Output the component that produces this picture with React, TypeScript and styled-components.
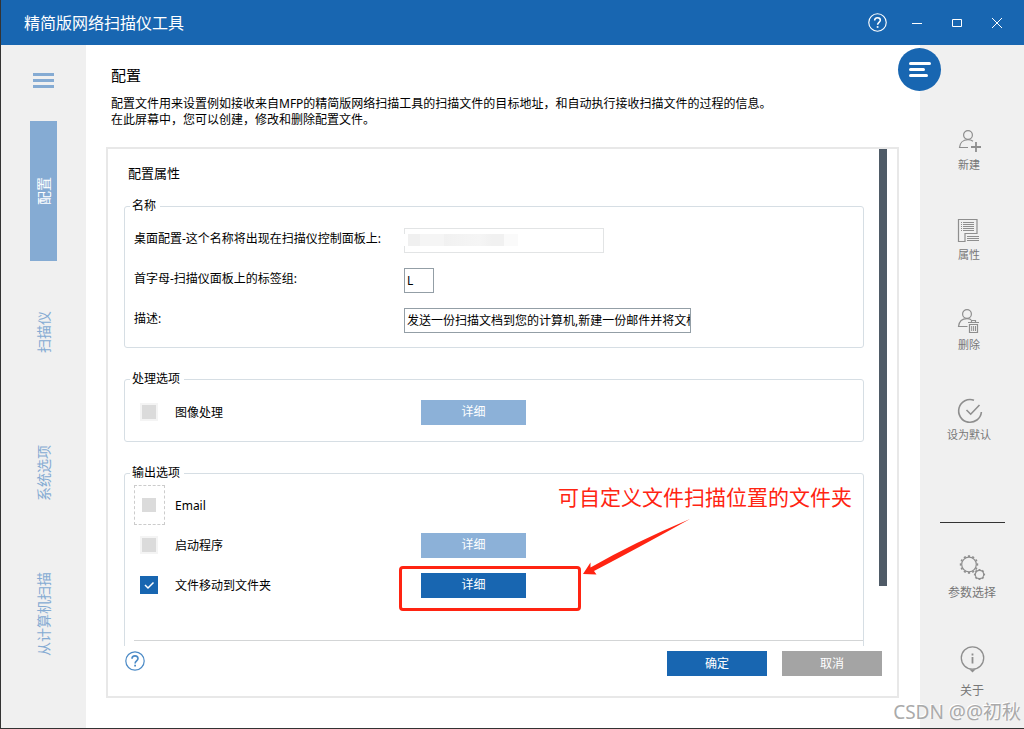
import React from "react";
import styled, { createGlobalStyle } from "styled-components";

const blue = "#1866b1";
const softBlue = "#8cb1d8";
const red = "#ff2412";

const GlobalStyle = createGlobalStyle`
  *, *::before, *::after { box-sizing: border-box; }
  body {
    margin: 0;
    background: #fff;
    color: #000;
    font: 12px/16px "Noto Sans", "Noto Sans CJK SC", sans-serif;
  }
  button, input { font: inherit; }
  button { cursor: pointer; }
  svg { display: block; fill: none; }
`;

const Window = styled.div`
  position: relative;
  display: flex;
  flex-direction: column;
  height: 100vh;
  min-height: 480px;
  border: solid #333;
  border-width: 0 0 1px 1px;
  overflow: hidden;
`;

const TitleBar = styled.header`
  display: flex;
  flex: none;
  align-items: center;
  justify-content: space-between;
  height: 45px;
  padding: 0 7px 0 23px;
  background: ${blue};
  color: #fff;
`;

const AppTitle = styled.h1`
  margin: 0;
  font-size: 16px;
  line-height: 24px;
  font-weight: 400;
`;

const WindowControls = styled.div`
  display: flex;
`;

const IconButton = styled.button`
  display: flex;
  align-items: center;
  justify-content: center;
  width: 40px;
  height: 45px;
  padding: 0;
  border: 0;
  background: none;
  color: inherit;
`;

const Body = styled.div`
  position: relative;
  display: grid;
  grid-template-columns: 85px minmax(0, 1fr) 104px;
  grid-template-rows: minmax(0, 1fr);
  flex: 1;
  min-height: 0;
`;

const Nav = styled.nav`
  display: flex;
  flex-direction: column;
  gap: 1px;
  padding: 28px 0 0 29px;
  background: #f0f0f0;
`;

const MenuButton = styled.button`
  display: flex;
  flex-direction: column;
  gap: 3px;
  width: 27px;
  margin-bottom: 32px;
  padding: 0 3px;
  border: 0;
  background: none;
`;

const MenuLine = styled.span`
  width: 21px;
  height: 3px;
  background: #85abd3;
`;

const Tab = styled.button<{ $active?: boolean }>`
  width: 27px;
  height: 140px;
  padding: 0;
  border: 0;
  background: ${(p) => (p.$active ? "#85abd3" : "transparent")};
  color: ${(p) => (p.$active ? "#fff" : "#85abd3")};
  font-size: 14px;
  line-height: 24px;
  text-align: center;
  writing-mode: vertical-rl;
  text-orientation: sideways;
  transform: rotate(180deg);
`;

const Main = styled.main`
  display: flex;
  flex-direction: column;
  min-height: 0;
  padding: 20px 21px 30px 20px;
`;

const Intro = styled.div`
  padding-left: 5px;
`;

const PageTitle = styled.h2`
  margin: 0 0 11px;
  font-size: 15px;
  line-height: 20px;
  font-weight: 400;
`;

const Description = styled.p`
  margin: 0;
`;

const Card = styled.form`
  display: flex;
  flex-direction: column;
  flex: 1;
  min-height: 0;
  margin-top: 19px;
  border: 2px solid #e8e8e8;
`;

const Viewport = styled.div`
  display: flex;
  flex: 1 1 0;
  min-height: 0;
  padding-right: 10px;
  overflow: hidden;
`;

const Properties = styled.div`
  flex: 1;
  min-width: 0;
  padding: 14px 15px 0 16px;
`;

const Scrollbar = styled.div`
  flex: none;
  width: 8px;
  height: 88%;
  background: #4f5b67;
`;

const SectionTitle = styled.h3`
  margin: 0 0 15px;
  padding-left: 4px;
  font-size: 13px;
  line-height: 20px;
  font-weight: 400;
`;

const Group = styled.fieldset`
  min-width: 0;
  margin: 0 0 23px;
  padding: 0;
  border: 1px solid #d6dee4;
  border-radius: 3px;
`;

const Legend = styled.legend`
  margin-left: 5px;
  padding: 0 4px 0 2px;
`;

const Rows = styled.div<{ $top: number; $bottom: number }>`
  position: relative;
  margin: ${(p) => `${p.$top}px 0 ${p.$bottom}px 9px`};
`;

const Row = styled.div`
  display: flex;
  align-items: center;
  height: 40px;
`;

const FieldLabel = styled.label`
  flex: none;
  width: 270px;
  padding-bottom: 2px;
`;

const Field = styled.span`
  position: relative;
`;

const TextInput = styled.input<{ $width: number }>`
  display: block;
  width: ${(p) => p.$width}px;
  height: 25px;
  padding: 0 0 0 2px;
  border: 1px solid #939ea6;
  border-radius: 0;
  background: #fff;
  color: #000;
  outline: 0;
  &:disabled { border-color: #e2e4e5; }
`;

const Redaction = styled.span`
  position: absolute;
  left: 0;
  top: 6px;
  width: 114px;
  height: 12px;
  background: linear-gradient(90deg, #fff 4px, #f0f0f0 4px, #f0f0f0 16px, #f5f5f5 16px, #f5f5f5 40px, #f1f1f1 40px, #f4f4f4 64px, #f5f5f5 76px, #f1f1f1 88px, #f1f1f1 100px, #fafafa 100px);
`;

const CheckCell = styled.span<{ $focused?: boolean }>`
  position: relative;
  display: flex;
  align-items: center;
  flex: none;
  width: 31px;
  height: 40px;
  margin-right: 10px;
  padding-left: ${(p) => (p.$focused ? 5 : 6)}px;
  border: ${(p) => (p.$focused ? "1px dashed #ccc" : "0")};
`;

const Checkbox = styled.input<{ $plain?: boolean }>`
  appearance: none;
  width: 18px;
  height: 18px;
  margin: 0;
  border: 2px solid ${(p) => (p.$plain ? "#fff" : "#f4f4f4")};
  background: #dbdbdb;
  &:checked {
    border-color: ${blue};
    background: ${blue};
  }
`;

const Tick = styled.svg`
  position: absolute;
  left: 6px;
  pointer-events: none;
`;

const OptionLabel = styled.label`
  flex: none;
  width: 246px;
  padding-top: 2px;
`;

const Button = styled.button<{ $width: number; $tone?: string }>`
  width: ${(p) => p.$width}px;
  height: 25px;
  padding: 0;
  border: 0;
  background: ${(p) => p.$tone ?? blue};
  color: #fff;
`;

const Divider = styled.hr`
  margin: 35px 0 0;
  border: 0;
  border-top: 1px solid #d3d5d6;
`;

const Highlight = styled.div`
  position: absolute;
  left: 265px;
  top: 81px;
  width: 182px;
  height: 45px;
  border: 3px solid ${red};
  border-radius: 4px;
  pointer-events: none;
`;

const Note = styled.div`
  position: absolute;
  left: 424px;
  top: -2px;
  color: ${red};
  font-size: 21px;
  line-height: 28px;
  white-space: nowrap;
`;

const Arrow = styled.svg`
  position: absolute;
  left: 449px;
  top: 33px;
`;

const Footer = styled.footer`
  display: flex;
  align-items: flex-start;
  gap: 15px;
  flex: none;
  padding: 5px 15px 20px 17px;
`;

const HelpButton = styled.button`
  margin-right: auto;
  padding: 0;
  border: 0;
  background: none;
  color: #4b8ac6;
`;

const Tools = styled.aside`
  display: flex;
  flex-direction: column;
  align-items: center;
  padding-top: 84px;
  background: #f0f0f0;
  color: #8e8e8e;
`;

const ToolGroup = styled.div<{ $shift?: boolean }>`
  display: flex;
  flex-direction: column;
  align-items: center;
  gap: ${(p) => (p.$shift ? 46 : 45)}px;
  padding-right: ${(p) => (p.$shift ? 6 : 0)}px;
`;

const Tool = styled.button<{ $size: number; $gap: number }>`
  display: flex;
  flex-direction: column;
  align-items: center;
  gap: ${(p) => p.$gap}px;
  padding: 0;
  border: 0;
  background: none;
  color: #8e8e8e;
  font-size: ${(p) => p.$size}px;
  line-height: 16px;
  svg { overflow: visible; }
`;

const ToolText = styled.span`
  color: #777;
`;

const ToolDivider = styled.hr`
  width: 65px;
  margin: 79px 0 32px;
  border: 0;
  border-top: 1px solid #333;
`;

const PanelToggle = styled.button`
  position: absolute;
  right: 83px;
  top: 3px;
  display: flex;
  align-items: center;
  justify-content: center;
  width: 43px;
  height: 43px;
  padding: 0;
  border: 0;
  border-radius: 50%;
  background: ${blue};
`;

const Watermark = styled.div`
  position: absolute;
  right: 3px;
  bottom: 2px;
  color: #aaa;
  font-size: 19px;
  line-height: 28px;
  text-shadow: -1px -1px 0 #fff;
  white-space: nowrap;
  pointer-events: none;
`;

const QuestionIcon = ({ size, width }: { size: number; width: number }) => (
  <svg width={size} height={size} viewBox="0 0 20 20" stroke="currentColor" strokeWidth={width}>
    <circle cx="10" cy="10" r="9.2" />
    <path d="M7 7.8C7 5.9 8.2 4.9 10 4.9s3 1 3 2.7c0 2.2-2.9 2.4-2.9 4.8" strokeWidth="1.6" />
    <path d="M10.1 13.8v1.8" strokeWidth="1.8" />
  </svg>
);

const NewUserIcon = () => (
  <svg width="24" height="24" stroke="currentColor" strokeWidth="1.2">
    <circle cx="11" cy="6" r="4.4" />
    <path d="M11 18.5H2.5C2.8 14.5 5.5 10.7 11 10.7c2 0 3.6.6 5 1.6" />
    <path d="M14 18h10M19 13v10" strokeWidth="1.8" />
  </svg>
);

const PropertiesIcon = () => (
  <svg width="24" height="24" stroke="currentColor">
    <path d="M1.5.5H20v14H8v8H1.5z" strokeWidth="1.2" />
    <path d="M6 3.5h11M6 5.5h11M6 7.5h11M6 9.5h11M6 11.5h11M4 3.5h1M4 5.5h1M4 7.5h1M4 9.5h1M4 11.5h1M10 17.5h12M10 19.5h12M10 21.5h12" />
  </svg>
);

const DeleteUserIcon = () => (
  <svg width="24" height="24" stroke="currentColor" strokeWidth="1.2">
    <circle cx="10" cy="5" r="4.4" />
    <path d="M10.5 17.5H1.5C2 13.5 4.5 9.7 10 9.7c1.8 0 3 .3 4.2 1" />
    <path d="M11 13.5h11M14.5 13.5v-2h4v2M12.500 15.5h8v8h-8z" />
    <path d="M14.7 17v5M16.6 17v5M18.5 17v5" strokeWidth="1" />
  </svg>
);

const DefaultIcon = () => (
  <svg width="24" height="24" stroke="currentColor" strokeWidth="1.6">
    <path d="M17 1.2A11.4 11.4 0 1 0 24.4 13" />
    <path d="M9.5 11l4.2 4.2L22.5 6" />
  </svg>
);

const GearsIcon = () => (
  <svg width="26" height="26" stroke="currentColor">
    <circle cx="10" cy="9.5" r="7.3" strokeWidth="1.2" />
    <circle cx="10" cy="9.5" r="8.4" strokeWidth="1.6" pathLength="24" strokeDasharray="1 1" strokeDashoffset="0.5" />
    <circle cx="20.5" cy="19.5" r="4.2" strokeWidth="1.2" />
    <circle cx="20.5" cy="19.5" r="5" strokeWidth="1.2" pathLength="16" strokeDasharray="1 1" strokeDashoffset="0.5" />
  </svg>
);

const AboutIcon = () => (
  <svg width="26" height="26" stroke="currentColor">
    <circle cx="13.5" cy="12" r="11.2" strokeWidth="1.3" />
    <path d="M10.5 23.500h6l-3 3z" fill="currentColor" stroke="none" />
    <path d="M13.5 7.5v2M13.5 11v6.5" strokeWidth="1.8" />
  </svg>
);

const options = [
  { id: "email", label: "Email", focused: true },
  { id: "launch", label: "启动程序", button: true },
  { id: "move", label: "文件移动到文件夹", button: true, checked: true },
];

const tools = [
  { label: "新建", icon: <NewUserIcon /> },
  { label: "属性", icon: <PropertiesIcon /> },
  { label: "删除", icon: <DeleteUserIcon /> },
  { label: "设为默认", icon: <DefaultIcon /> },
];

export default function App() {
  return (
    <>
      <GlobalStyle />
      <Window lang="zh-CN">
        <TitleBar>
          <AppTitle>精简版网络扫描仪工具</AppTitle>
          <WindowControls>
            <IconButton aria-label="帮助"><QuestionIcon size={19} width={1.2} /></IconButton>
            <IconButton aria-label="最小化">
              <svg width="10" height="10" stroke="currentColor"><path d="M0 5.5h10" /></svg>
            </IconButton>
            <IconButton aria-label="最大化">
              <svg width="10" height="8" stroke="currentColor"><path d="M.5.5h9v7h-9z" /></svg>
            </IconButton>
            <IconButton aria-label="关闭">
              <svg width="10" height="10" stroke="currentColor"><path d="M0 0l10 10M10 0L0 10" /></svg>
            </IconButton>
          </WindowControls>
        </TitleBar>
        <Body>
          <Nav>
            <MenuButton aria-label="菜单"><MenuLine /><MenuLine /><MenuLine /></MenuButton>
            <Tab $active>配置</Tab>
            <Tab>扫描仪</Tab>
            <Tab>系统选项</Tab>
            <Tab>从计算机扫描</Tab>
          </Nav>
          <Main>
            <Intro>
              <PageTitle>配置</PageTitle>
              <Description>
                配置文件用来设置例如接收来自MFP的精简版网络扫描工具的扫描文件的目标地址，和自动执行接收扫描文件的过程的信息。
                <br />
                在此屏幕中，您可以创建，修改和删除配置文件。
              </Description>
            </Intro>
            <Card onSubmit={(e) => e.preventDefault()}>
              <Viewport>
                <Properties>
                  <SectionTitle>配置属性</SectionTitle>
                  <Group>
                    <Legend>名称</Legend>
                    <Rows $top={6} $bottom={7}>
                      <Row>
                        <FieldLabel htmlFor="name">桌面配置-这个名称将出现在扫描仪控制面板上:</FieldLabel>
                        <Field>
                          <TextInput id="name" $width={200} disabled />
                          <Redaction />
                        </Field>
                      </Row>
                      <Row>
                        <FieldLabel htmlFor="initial">首字母-扫描仪面板上的标签组:</FieldLabel>
                        <TextInput id="initial" $width={30} defaultValue="L" />
                      </Row>
                      <Row>
                        <FieldLabel htmlFor="description">描述:</FieldLabel>
                        <TextInput
                          id="description"
                          $width={287}
                          defaultValue="发送一份扫描文档到您的计算机,新建一份邮件并将文档"
                        />
                      </Row>
                    </Rows>
                  </Group>
                  <Group>
                    <Legend>处理选项</Legend>
                    <Rows $top={5} $bottom={9}>
                      <Row>
                        <CheckCell><Checkbox type="checkbox" id="image" /></CheckCell>
                        <OptionLabel htmlFor="image">图像处理</OptionLabel>
                        <Button type="button" $width={105} $tone={softBlue}>详细</Button>
                      </Row>
                    </Rows>
                  </Group>
                  <Group>
                    <Legend>输出选项</Legend>
                    <Rows $top={4} $bottom={40}>
                      {options.map((o) => (
                        <Row key={o.id}>
                          <CheckCell $focused={o.focused}>
                            <Checkbox type="checkbox" id={o.id} defaultChecked={o.checked} $plain={o.focused} />
                            {o.checked && (
                              <Tick width="18" height="18" stroke="#fff" strokeWidth="1.5">
                                <path d="M5 9l3 3 5.5-5.5" />
                              </Tick>
                            )}
                          </CheckCell>
                          <OptionLabel htmlFor={o.id}>{o.label}</OptionLabel>
                          {o.button && (
                            <Button type="button" $width={105} $tone={o.checked ? blue : softBlue}>详细</Button>
                          )}
                        </Row>
                      ))}
                      <Divider />
                      <Highlight />
                      <Note>可自定义文件扫描位置的文件夹</Note>
                      <Arrow width="108" height="58">
                        <path d="M0 56L7.5 44.5 7.5 49.5Q50 25 107 1 55 30 11 53L13.5 56.5Z" fill={red} />
                      </Arrow>
                    </Rows>
                  </Group>
                </Properties>
                <Scrollbar />
              </Viewport>
              <Footer>
                <HelpButton type="button" aria-label="帮助"><QuestionIcon size={20} width={1.2} /></HelpButton>
                <Button type="submit" $width={100}>确定</Button>
                <Button type="button" $width={100} $tone="#a4a4a4">取消</Button>
              </Footer>
            </Card>
          </Main>
          <Tools>
            <ToolGroup $shift>
              {tools.map((t) => (
                <Tool key={t.label} $size={11} $gap={4}>
                  {t.icon}
                  <ToolText>{t.label}</ToolText>
                </Tool>
              ))}
            </ToolGroup>
            <ToolDivider />
            <ToolGroup>
              <Tool $size={12} $gap={4}><GearsIcon /><ToolText>参数选择</ToolText></Tool>
              <Tool $size={12} $gap={11}><AboutIcon /><ToolText>关于</ToolText></Tool>
            </ToolGroup>
          </Tools>
          <PanelToggle aria-label="展开面板">
            <svg width="22" height="15" stroke="#fff" strokeWidth="3" strokeLinecap="round">
              <path d="M1.5 1.5h19M1.5 7.5h13M1.5 13.5h16" />
            </svg>
          </PanelToggle>
        </Body>
        <Watermark>CSDN @@初秋</Watermark>
      </Window>
    </>
  );
}
